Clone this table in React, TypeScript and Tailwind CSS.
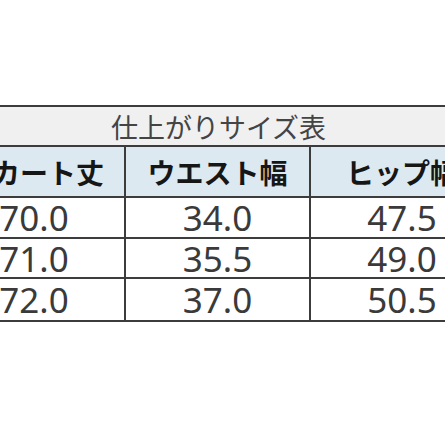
export default function App() {
  const rows = [
    ["70.0", "34.0", "47.5"],
    ["71.0", "35.5", "49.0"],
    ["72.0", "37.0", "50.5"],
  ]
  const heights = ["h-[41px]", "h-[40px]", "h-[41px]"]

  return (
    <div className="w-[445px] h-[445px] overflow-hidden bg-white pt-[105px]">
      {/* size table, wider than the viewport and cut at both sides */}
      <div className="ml-[-58px] w-[553px] border-2 border-[#3c3c3c] bg-white">
        <div className="h-[40px] flex items-center justify-center bg-[#f0f0f0] border-b-2 border-[#3c3c3c] text-[27px] text-[#444] font-['Noto_Sans_CJK_JP',sans-serif] leading-none">
          仕上がりサイズ表
        </div>
        <div className="grid grid-cols-[182px_185px_182px] h-[51px] border-b-2 border-[#3c3c3c] bg-[#dce9f1] text-[28px] font-bold text-[#161616] font-['Noto_Sans_CJK_JP',sans-serif] leading-none">
          <div className="flex items-center justify-center border-r-2 border-[#3c3c3c]">スカート丈</div>
          <div className="flex items-center justify-center border-r-2 border-[#3c3c3c]">ウエスト幅</div>
          <div className="flex items-center justify-center">ヒップ幅</div>
        </div>
        {rows.map((r, i) => (
          <div
            key={i}
            className={`grid grid-cols-[182px_185px_182px] ${heights[i]} ${i < 2 ? "border-b-2 border-[#3c3c3c]" : ""} text-[35px] text-[#3a3a3a] font-['Noto_Sans',sans-serif] leading-none`}
          >
            <div className="flex items-center justify-center border-r-2 border-[#3c3c3c]">{r[0]}</div>
            <div className="flex items-center justify-center border-r-2 border-[#3c3c3c]">{r[1]}</div>
            <div className="flex items-center justify-center">{r[2]}</div>
          </div>
        ))}
      </div>
    </div>
  )
}
